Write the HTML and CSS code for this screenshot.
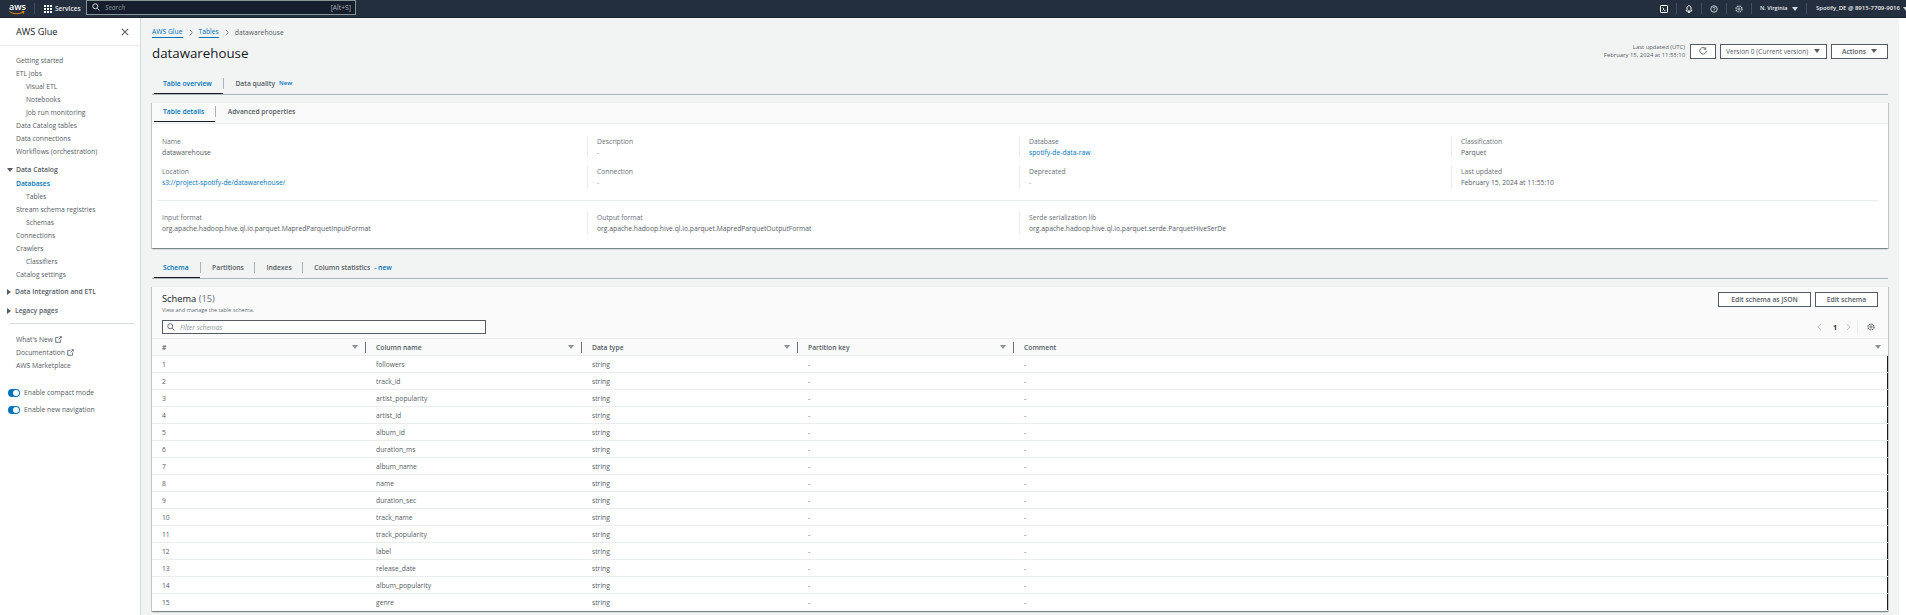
FILE: index.html
```html
<!DOCTYPE html>
<html lang="en">
<head>
    <meta charset="UTF-8">
    <meta name="viewport" content="width=device-width, initial-scale=1.0">
    <title>datawarehouse | AWS Glue</title>
    <link rel="stylesheet" href="styles.css">
</head>
<body>
    <header class="topbar">
        <div class="aws-logo">
            <span class="aws-word">aws</span>
            <svg class="aws-smile" viewBox="0 0 16 4"><path d="M0.5 0.5C4 3.2 10 3.6 14.5 1M12.8 0.6L15 0.5L14.4 2.6" fill="none" stroke="#f90" stroke-width="0.9"/></svg>
        </div>
        <span class="top-sep first"></span>
        <svg class="grid-icon" viewBox="0 0 8 8"><path d="M0 0h2v2H0zM3 0h2v2H3zM6 0h2v2H6zM0 3h2v2H0zM3 3h2v2H3zM6 3h2v2H6zM0 6h2v2H0zM3 6h2v2H3zM6 6h2v2H6z" fill="#fff"/></svg>
        <span class="services">Services</span>
        <div class="top-search">
            <svg class="icon-8" viewBox="0 0 16 16"><circle cx="6.5" cy="6.5" r="5" fill="none" stroke="#d5dbdb" stroke-width="2"/><path d="M10.5 10.5L15 15" stroke="#d5dbdb" stroke-width="2"/></svg>
            <span class="top-search-text">Search</span>
            <span class="top-search-key">[Alt+S]</span>
        </div>
        <div class="top-right">
            <svg class="icon-8" viewBox="0 0 16 16"><rect x="1" y="1" width="14" height="14" rx="1" fill="none" stroke="#fff" stroke-width="2"/><path d="M5 5l3 3-3 3M8 11h3" fill="none" stroke="#fff" stroke-width="1.6"/></svg>
            <span class="top-sep"></span>
            <svg class="icon-8" viewBox="0 0 16 16"><path d="M8 1.5c-2.6 0-4 2-4 4.5v3l-2 3h12l-2-3V6c0-2.500-1.400-4.500-4-4.500zM6.500 13.500h3v1.500h-3z" fill="none" stroke="#fff" stroke-width="2"/></svg>
            <span class="top-sep"></span>
            <svg class="icon-8" viewBox="0 0 16 16"><circle cx="8" cy="8" r="6.500" fill="none" stroke="#d5dbdb" stroke-width="1.800"/><path d="M5.800 6.200C6 3.800 10.300 4 10.200 6.300C10.100 8 8 7.800 8 9.800M8 11v1.500" fill="none" stroke="#d5dbdb" stroke-width="1.600"/></svg>
            <span class="top-sep"></span>
            <svg class="icon-8" viewBox="0 0 16 16"><circle cx="8" cy="8" r="6" fill="none" stroke="#d5dbdb" stroke-width="2.400" stroke-dasharray="3 1.700"/><circle cx="8" cy="8" r="2.200" fill="none" stroke="#d5dbdb" stroke-width="1.600"/></svg>
            <span class="top-sep"></span>
            <span class="top-label region">N. Virginia</span><span class="caret white"></span>
            <span class="top-sep wide"></span>
            <span class="top-label account">Spotify_DE @ 8915-7709-9016</span><span class="caret white edge"></span>
        </div>
    </header>

    <div class="layout">
        <aside class="sidebar">
            <div class="side-head">
                <span>AWS Glue</span>
                <svg class="side-close" viewBox="0 0 10 10"><path d="M1 1l8 8M9 1l-8 8" stroke="#545b64" stroke-width="1.300"/></svg>
            </div>
            <nav class="side-nav">
                <a>Getting started</a>
                <a>ETL jobs</a>
                <a class="sub">Visual ETL</a>
                <a class="sub">Notebooks</a>
                <a class="sub">Job run monitoring</a>
                <a>Data Catalog tables</a>
                <a>Data connections</a>
                <a>Workflows (orchestration)</a>
                <h3 class="side-group"><span class="caret dark"></span>Data Catalog</h3>
                <a class="active">Databases</a>
                <a class="sub">Tables</a>
                <a>Stream schema registries</a>
                <a class="sub">Schemas</a>
                <a>Connections</a>
                <a>Crawlers</a>
                <a class="sub">Classifiers</a>
                <a>Catalog settings</a>
                <h3 class="side-group closed"><span class="caret-right"></span>Data Integration and ETL</h3>
                <h3 class="side-group closed"><span class="caret-right"></span>Legacy pages</h3>
                <hr class="side-rule">
                <a>What's New <svg class="ext" viewBox="0 0 10 10"><path d="M5 2H1v7h7V5M5 5l4-4M6.500 1H9v2.500" fill="none" stroke="#545b64" stroke-width="1.200"/></svg></a>
                <a>Documentation <svg class="ext" viewBox="0 0 10 10"><path d="M5 2H1v7h7V5M5 5l4-4M6.500 1H9v2.500" fill="none" stroke="#545b64" stroke-width="1.200"/></svg></a>
                <a>AWS Marketplace</a>
            </nav>
            <div class="toggles">
                <label class="toggle-row"><span class="toggle"></span>Enable compact mode</label>
                <label class="toggle-row"><span class="toggle"></span>Enable new navigation</label>
            </div>
        </aside>

        <main class="content">
            <div class="crumbs">
                <a>AWS Glue</a>
                <svg class="crumb-arrow" viewBox="0 0 6 10"><path d="M1 1l4 4-4 4" fill="none" stroke="#687078" stroke-width="1.200"/></svg>
                <a>Tables</a>
                <svg class="crumb-arrow" viewBox="0 0 6 10"><path d="M1 1l4 4-4 4" fill="none" stroke="#687078" stroke-width="1.200"/></svg>
                <span>datawarehouse</span>
            </div>

            <div class="page-head">
                <h1>datawarehouse</h1>
                <div class="page-actions">
                    <div class="updated">Last updated (UTC)<br>February 15, 2024 at 11:55:10</div>
                    <button class="btn refresh"><svg class="icon-8" viewBox="0 0 16 16"><path d="M13 3.500A6.500 6.500 0 1 0 14.500 8M13.500 0.500V4.500H9.500" fill="none" stroke="#545b64" stroke-width="1.800"/></svg></button>
                    <button class="btn version">Version 0 (Current version)<span class="caret dark"></span></button>
                    <button class="btn actions">Actions<span class="caret dark"></span></button>
                </div>
            </div>

            <div class="tabs top-tabs">
                <a class="tab on">Table overview</a>
                <a class="tab">Data quality <em>New</em></a>
            </div>

            <section class="card details">
                <div class="tabs card-tabs">
                    <a class="tab on">Table details</a>
                    <a class="tab">Advanced properties</a>
                </div>
                <div class="detail-grid">
                    <div class="kv"><label>Name</label><p>datawarehouse</p></div>
                    <div class="kv"><label>Description</label><p class="muted">-</p></div>
                    <div class="kv"><label>Database</label><p class="link">spotify-de-data-raw</p></div>
                    <div class="kv"><label>Classification</label><p>Parquet</p></div>
                    <div class="kv"><label>Location</label><p class="link">s3://project-spotify-de/datawarehouse/</p></div>
                    <div class="kv"><label>Connection</label><p class="muted">-</p></div>
                    <div class="kv"><label>Deprecated</label><p class="muted">-</p></div>
                    <div class="kv"><label>Last updated</label><p>February 15, 2024 at 11:55:10</p></div>
                </div>
                <div class="detail-grid second">
                    <div class="kv"><label>Input format</label><p>org.apache.hadoop.hive.ql.io.parquet.MapredParquetInputFormat</p></div>
                    <div class="kv"><label>Output format</label><p>org.apache.hadoop.hive.ql.io.parquet.MapredParquetOutputFormat</p></div>
                    <div class="kv"><label>Serde serialization lib</label><p>org.apache.hadoop.hive.ql.io.parquet.serde.ParquetHiveSerDe</p></div>
                </div>
            </section>

            <div class="tabs schema-tabs">
                <a class="tab on">Schema</a>
                <a class="tab">Partitions</a>
                <a class="tab">Indexes</a>
                <a class="tab">Column statistics <em>- new</em></a>
            </div>

            <section class="card schema">
                <div class="schema-head">
                    <div class="schema-title">
                        <h2>Schema <span>(15)</span></h2>
                        <p>View and manage the table schema.</p>
                        <div class="filter">
                            <svg class="icon-8" viewBox="0 0 16 16"><circle cx="6.500" cy="6.500" r="5" fill="none" stroke="#545b64" stroke-width="1.800"/><path d="M10.500 10.500L15 15" stroke="#545b64" stroke-width="1.800"/></svg>
                            <span>Filter schemas</span>
                        </div>
                    </div>
                    <div class="schema-tools">
                        <div class="schema-btns">
                            <button class="btn strong">Edit schema as JSON</button>
                            <button class="btn strong">Edit schema</button>
                        </div>
                        <div class="pager">
                            <svg class="pager-arrow" viewBox="0 0 6 10"><path d="M5 1L1 5l4 4" fill="none" stroke="#aab7b8" stroke-width="1"/></svg>
                            <b>1</b>
                            <svg class="pager-arrow" viewBox="0 0 6 10"><path d="M1 1l4 4-4 4" fill="none" stroke="#aab7b8" stroke-width="1"/></svg>
                            <span class="pager-sep"></span>
                            <svg class="icon-8" viewBox="0 0 16 16"><circle cx="8" cy="8" r="6" fill="none" stroke="#545b64" stroke-width="2.400" stroke-dasharray="3 1.700"/><circle cx="8" cy="8" r="2.200" fill="none" stroke="#545b64" stroke-width="1.600"/></svg>
                        </div>
                    </div>
                </div>
                <table class="schema-table">
                    <colgroup>
                        <col class="c1"><col class="c2"><col class="c3"><col class="c4"><col>
                    </colgroup>
                    <thead>
                        <tr>
                            <th><div class="th-in">#<span class="caret gray"></span></div></th>
                            <th><div class="th-in">Column name<span class="caret gray"></span></div></th>
                            <th><div class="th-in">Data type<span class="caret gray"></span></div></th>
                            <th><div class="th-in">Partition key<span class="caret gray"></span></div></th>
                            <th><div class="th-in">Comment<span class="caret gray"></span></div></th>
                        </tr>
                    </thead>
                    <tbody>
                        <tr><td>1</td><td>followers</td><td>string</td><td>-</td><td>-</td></tr>
                        <tr><td>2</td><td>track_id</td><td>string</td><td>-</td><td>-</td></tr>
                        <tr><td>3</td><td>artist_popularity</td><td>string</td><td>-</td><td>-</td></tr>
                        <tr><td>4</td><td>artist_id</td><td>string</td><td>-</td><td>-</td></tr>
                        <tr><td>5</td><td>album_id</td><td>string</td><td>-</td><td>-</td></tr>
                        <tr><td>6</td><td>duration_ms</td><td>string</td><td>-</td><td>-</td></tr>
                        <tr><td>7</td><td>album_name</td><td>string</td><td>-</td><td>-</td></tr>
                        <tr><td>8</td><td>name</td><td>string</td><td>-</td><td>-</td></tr>
                        <tr><td>9</td><td>duration_sec</td><td>string</td><td>-</td><td>-</td></tr>
                        <tr><td>10</td><td>track_name</td><td>string</td><td>-</td><td>-</td></tr>
                        <tr><td>11</td><td>track_popularity</td><td>string</td><td>-</td><td>-</td></tr>
                        <tr><td>12</td><td>label</td><td>string</td><td>-</td><td>-</td></tr>
                        <tr><td>13</td><td>release_date</td><td>string</td><td>-</td><td>-</td></tr>
                        <tr><td>14</td><td>album_popularity</td><td>string</td><td>-</td><td>-</td></tr>
                        <tr><td>15</td><td>genre</td><td>string</td><td>-</td><td>-</td></tr>
                    </tbody>
                </table>
            </section>
        </main>

        <div class="rail"></div>
    </div>
</body>
</html>
```

FILE: styles.css
```css
* {
    box-sizing: border-box;
}
html, body {
    margin: 0;
    padding: 0;
    height: 615px;
    overflow: hidden;
}
body {
    font-family: "Open Sans", "Noto Sans", Arial, sans-serif;
    font-size: 6.75px;
    line-height: 11px;
    color: #545b64;
    background-color: #fff;
}
p, h1, h2, h3 {
    margin: 0;
    font-weight: normal;
}
button {
    font-family: inherit;
}
.icon-8 {
    width: 8px;
    height: 8px;
    flex: none;
}

/* carets */
.caret {
    display: inline-block;
    width: 0;
    height: 0;
    border-left: 3px solid transparent;
    border-right: 3px solid transparent;
    border-top: 4px solid #545b64;
}
.caret.white {
    border-top-color: #d5dbdb;
    margin-left: 3px;
}
.caret.white.edge {
    margin-right: -3px;
}
.caret.gray {
    border-top-color: #879596;
}
.caret-right {
    display: inline-block;
    width: 0;
    height: 0;
    border-top: 3px solid transparent;
    border-bottom: 3px solid transparent;
    border-left: 4px solid #545b64;
}

/* top bar */
.topbar {
    height: 18px;
    background-color: #232f3e;
    display: flex;
    align-items: center;
    padding: 0 0 0 9px;
    color: #fff;
    border-bottom: 1px solid #1a2330;
}
.aws-logo {
    width: 17px;
    height: 14px;
    position: relative;
    flex: none;
}
.aws-word {
    display: block;
    font-size: 9px;
    line-height: 9px;
    font-weight: 600;
    text-align: center;
}
.aws-smile {
    display: block;
    width: 16px;
    height: 4px;
}
.top-sep {
    width: 1px;
    height: 11px;
    background-color: #414d5c;
    flex: none;
    margin: 0 8px;
}
.top-sep.first {
    margin: 0 9px 0 8px;
}
.top-sep.wide {
    margin: 0 9px 0 8px;
}
.grid-icon {
    width: 8px;
    height: 8px;
    flex: none;
}
.services {
    font-size: 6.500px;
    font-weight: 600;
    margin-left: 3px;
    width: 31px;
    flex: none;
    color: #eaeded;
}
.top-search {
    width: 270px;
    height: 15px;
    margin-top: -3px;
    background-color: #161e2d;
    border: 1px solid #879596;
    display: flex;
    align-items: center;
    padding: 0 4px 0 5px;
    color: #879596;
}
.top-search-text {
    font-style: italic;
    margin-left: 5px;
    flex: 1;
}
.top-search-key {
    color: #aab7b8;
}
.top-right {
    margin-left: auto;
    display: flex;
    align-items: center;
}
.top-label {
    font-size: 6px;
    font-weight: 600;
    color: #eaeded;
    white-space: nowrap;
}
.region {
    width: 29px;
    font-size: 5.500px;
}
.account {
    width: 84px;
    overflow: hidden;
}

/* page layout */
.layout {
    display: flex;
    height: 597px;
}
.sidebar {
    width: 141px;
    flex: none;
    background-color: #fff;
    border-right: 1px solid #d5dbdb;
}
.side-head {
    height: 28px;
    border-bottom: 1px solid #eaeded;
    display: flex;
    align-items: center;
    justify-content: space-between;
    padding: 0 11px 0 16px;
    font-size: 9.200px;
    font-weight: 500;
    color: #16191f;
}
.side-close {
    width: 8px;
    height: 8px;
}
.side-nav {
    padding: 8px 6px 0 16px;
}
.side-nav a {
    display: block;
    height: 13px;
    line-height: 13px;
    white-space: nowrap;
}
.side-nav a.sub {
    padding-left: 10px;
}
.side-nav a.active {
    color: #0073bb;
    font-weight: 600;
}
.side-group {
    font-size: 6.750px;
    font-weight: 600;
    height: 13px;
    line-height: 13px;
    margin: 5px 0 1px -9px;
    display: flex;
    align-items: center;
    gap: 3px;
    color: #545b64;
}
.side-group.closed {
    margin: 4px 0 6px -9px;
    gap: 4px;
}
.side-group.closed + .side-group.closed {
    margin-top: 0;
}
.side-rule {
    border: 0;
    border-top: 1px solid #d5dbdb;
    margin: 0 0 9px -6px;
}
.ext {
    width: 7px;
    height: 7px;
    vertical-align: -0.500px;
}
.toggles {
    padding: 12px 0 0 8px;
}
.toggle-row {
    display: flex;
    align-items: center;
    height: 17px;
    gap: 4px;
}
.toggle {
    width: 12px;
    height: 8px;
    border-radius: 4px;
    background-color: #0073bb;
    position: relative;
}
.toggle::after {
    content: "";
    position: absolute;
    right: 1px;
    top: 1px;
    width: 6px;
    height: 6px;
    border-radius: 50%;
    background-color: #fff;
}

/* main column */
.content {
    flex: 1;
    min-width: 0;
    background-color: #f2f3f3;
    padding: 9px 11px 0 11px;
}
.rail {
    width: 7px;
    flex: none;
    background-color: #fff;
}
.crumbs {
    display: flex;
    align-items: center;
    height: 11px;
    gap: 6px;
}
.crumbs a {
    color: #0073bb;
    border-bottom: 1px solid #0073bb;
    line-height: 10px;
}
.crumb-arrow {
    width: 4px;
    height: 7px;
}
.page-head {
    display: flex;
    align-items: center;
    justify-content: space-between;
    height: 27px;
    margin-top: 1px;
    padding-bottom: 0;
}
.page-head h1 {
    font-size: 13.300px;
    line-height: 20px;
    color: #16191f;
    margin-top: 1px;
}
.page-actions {
    display: flex;
    align-items: center;
    gap: 4px;
    margin-top: -3px;
}
.updated {
    font-size: 5.900px;
    line-height: 8px;
    text-align: right;
    margin-right: 1px;
}
.btn {
    height: 15px;
    background-color: #fff;
    border: 1px solid #545b64;
    color: #545b64;
    font-size: 6.750px;
    padding: 0;
    display: flex;
    align-items: center;
    justify-content: center;
}
.btn.refresh {
    width: 26px;
}
.btn.version {
    width: 107px;
    justify-content: space-between;
    padding: 0 6px 0 5px;
    font-size: 6.600px;
}
.btn.actions {
    width: 57px;
    font-weight: 600;
    justify-content: space-between;
    padding: 0 10px;
}
.btn.strong {
    font-weight: 600;
}

/* tabs */
.tabs {
    display: flex;
    border-bottom: 1px solid #aab7b8;
}
.tab {
    display: flex;
    align-items: center;
    height: 16px;
    padding: 0 10px 5px 12.500px;
    font-weight: 600;
    position: relative;
    white-space: nowrap;
}
.tab + .tab::before {
    content: "";
    position: absolute;
    left: 0;
    top: 0;
    height: 11px;
    width: 1px;
    background-color: #aab7b8;
}
.tab.on {
    color: #0073bb;
    border-bottom: 1px solid #16191f;
    padding-left: 9px;
    padding-right: 11px;
}
.tab em {
    font-style: normal;
    color: #0073bb;
    margin-left: 4px;
}
.top-tabs {
    margin-top: 12px;
    height: 17px;
    padding-left: 2px;
}
.top-tabs .tab em {
    font-size: 6px;
}
.schema-tabs {
    margin-top: 14px;
    height: 17px;
    padding-left: 2px;
}

/* cards */
.card {
    background-color: #fff;
    border-top: 1px solid #eaeded;
    box-shadow: 0 1px 1px rgba(0, 28, 36, 0.3), 1px 1px 1px rgba(0, 28, 36, 0.15), -1px 1px 1px rgba(0, 28, 36, 0.15);
}
.details {
    margin-top: 7px;
    height: 146px;
}
.card-tabs {
    background-color: #fafafa;
    border-bottom: 1px solid #eaeded;
    height: 21px;
    padding: 3px 0 0 2px;
}
.detail-grid {
    display: grid;
    grid-template-columns: 429px 432px 432px 1fr;
    row-gap: 8px;
    margin: 12px 10px 0 6px;
    padding-bottom: 12px;
    border-bottom: 1px solid #eaeded;
}
.detail-grid.second {
    margin-top: 11px;
    border-bottom: 0;
}
.kv {
    padding-left: 9px;
    min-height: 22px;
    border-left: 1px solid #eaeded;
}
.kv:nth-child(4n+1) {
    padding-left: 4px;
    border-left: 0;
}
.kv label {
    display: block;
    color: #687078;
}
.kv p {
    color: #545b64;
    white-space: nowrap;
}
.kv .muted {
    color: #879596;
}
.kv .link {
    color: #0073bb;
}

/* schema card */
.schema {
    margin-top: 7px;
    height: 325px;
    position: relative;
    background-color: #fafafa;
}
.schema-head {
    display: flex;
    justify-content: space-between;
    height: 52px;
    padding: 5px 10px 0 10px;
    border-bottom: 1px solid #eaeded;
}
.schema-title h2 {
    font-size: 9.300px;
    line-height: 13px;
    font-weight: 500;
    color: #16191f;
}
.schema-title h2 span {
    color: #687078;
    font-weight: normal;
}
.schema-title p {
    font-size: 5.500px;
    line-height: 9px;
    margin-top: 1px;
    color: #687078;
}
.filter {
    width: 324px;
    height: 14px;
    margin-top: 5px;
    border: 1px solid #545b64;
    background-color: #fff;
    display: flex;
    align-items: center;
    padding-left: 4px;
    gap: 5px;
    font-style: italic;
    color: #879596;
}
.schema-tools {
    display: flex;
    flex-direction: column;
    align-items: flex-end;
}
.schema-btns {
    display: flex;
    gap: 4px;
}
.schema-btns .btn:first-child {
    width: 93px;
}
.schema-btns .btn:last-child {
    width: 63px;
}
.pager {
    display: flex;
    align-items: center;
    height: 14px;
    margin: 13px 3px 0 0;
    gap: 9px;
}
.pager b {
    color: #16191f;
    font-size: 6.500px;
    margin-left: 2px;
}
.pager-arrow {
    width: 5px;
    height: 8px;
}
.pager-sep {
    width: 1px;
    height: 14px;
    margin-left: -3px;
    background-color: #eaeded;
}
.schema-table {
    width: 100%;
    table-layout: fixed;
    border-collapse: collapse;
}
.schema-table .c1 {
    width: 214px;
}
.schema-table .c2 {
    width: 216px;
}
.schema-table .c3 {
    width: 216px;
}
.schema-table .c4 {
    width: 216px;
}
.schema-table th {
    height: 16px;
    padding: 1px 0 0 0;
    font-weight: 600;
    text-align: left;
    color: #545b64;
    background-color: #fafafa;
    border-bottom: 1px solid #eaeded;
}
.th-in {
    display: flex;
    align-items: center;
    justify-content: space-between;
    height: 11px;
    padding: 0 7px 0 10px;
    border-right: 1px solid #687078;
}
th:last-child .th-in {
    border-right: 0;
}
.schema-table td {
    height: 17px;
    padding: 1px 0 0 10px;
    background-color: #fff;
    border-bottom: 1px solid #eaeded;
    white-space: nowrap;
}
.schema-table tbody tr:last-child td {
    border-bottom: 0;
}
.schema-table td:last-child {
    border-right: 1px solid #16191f;
}
```
